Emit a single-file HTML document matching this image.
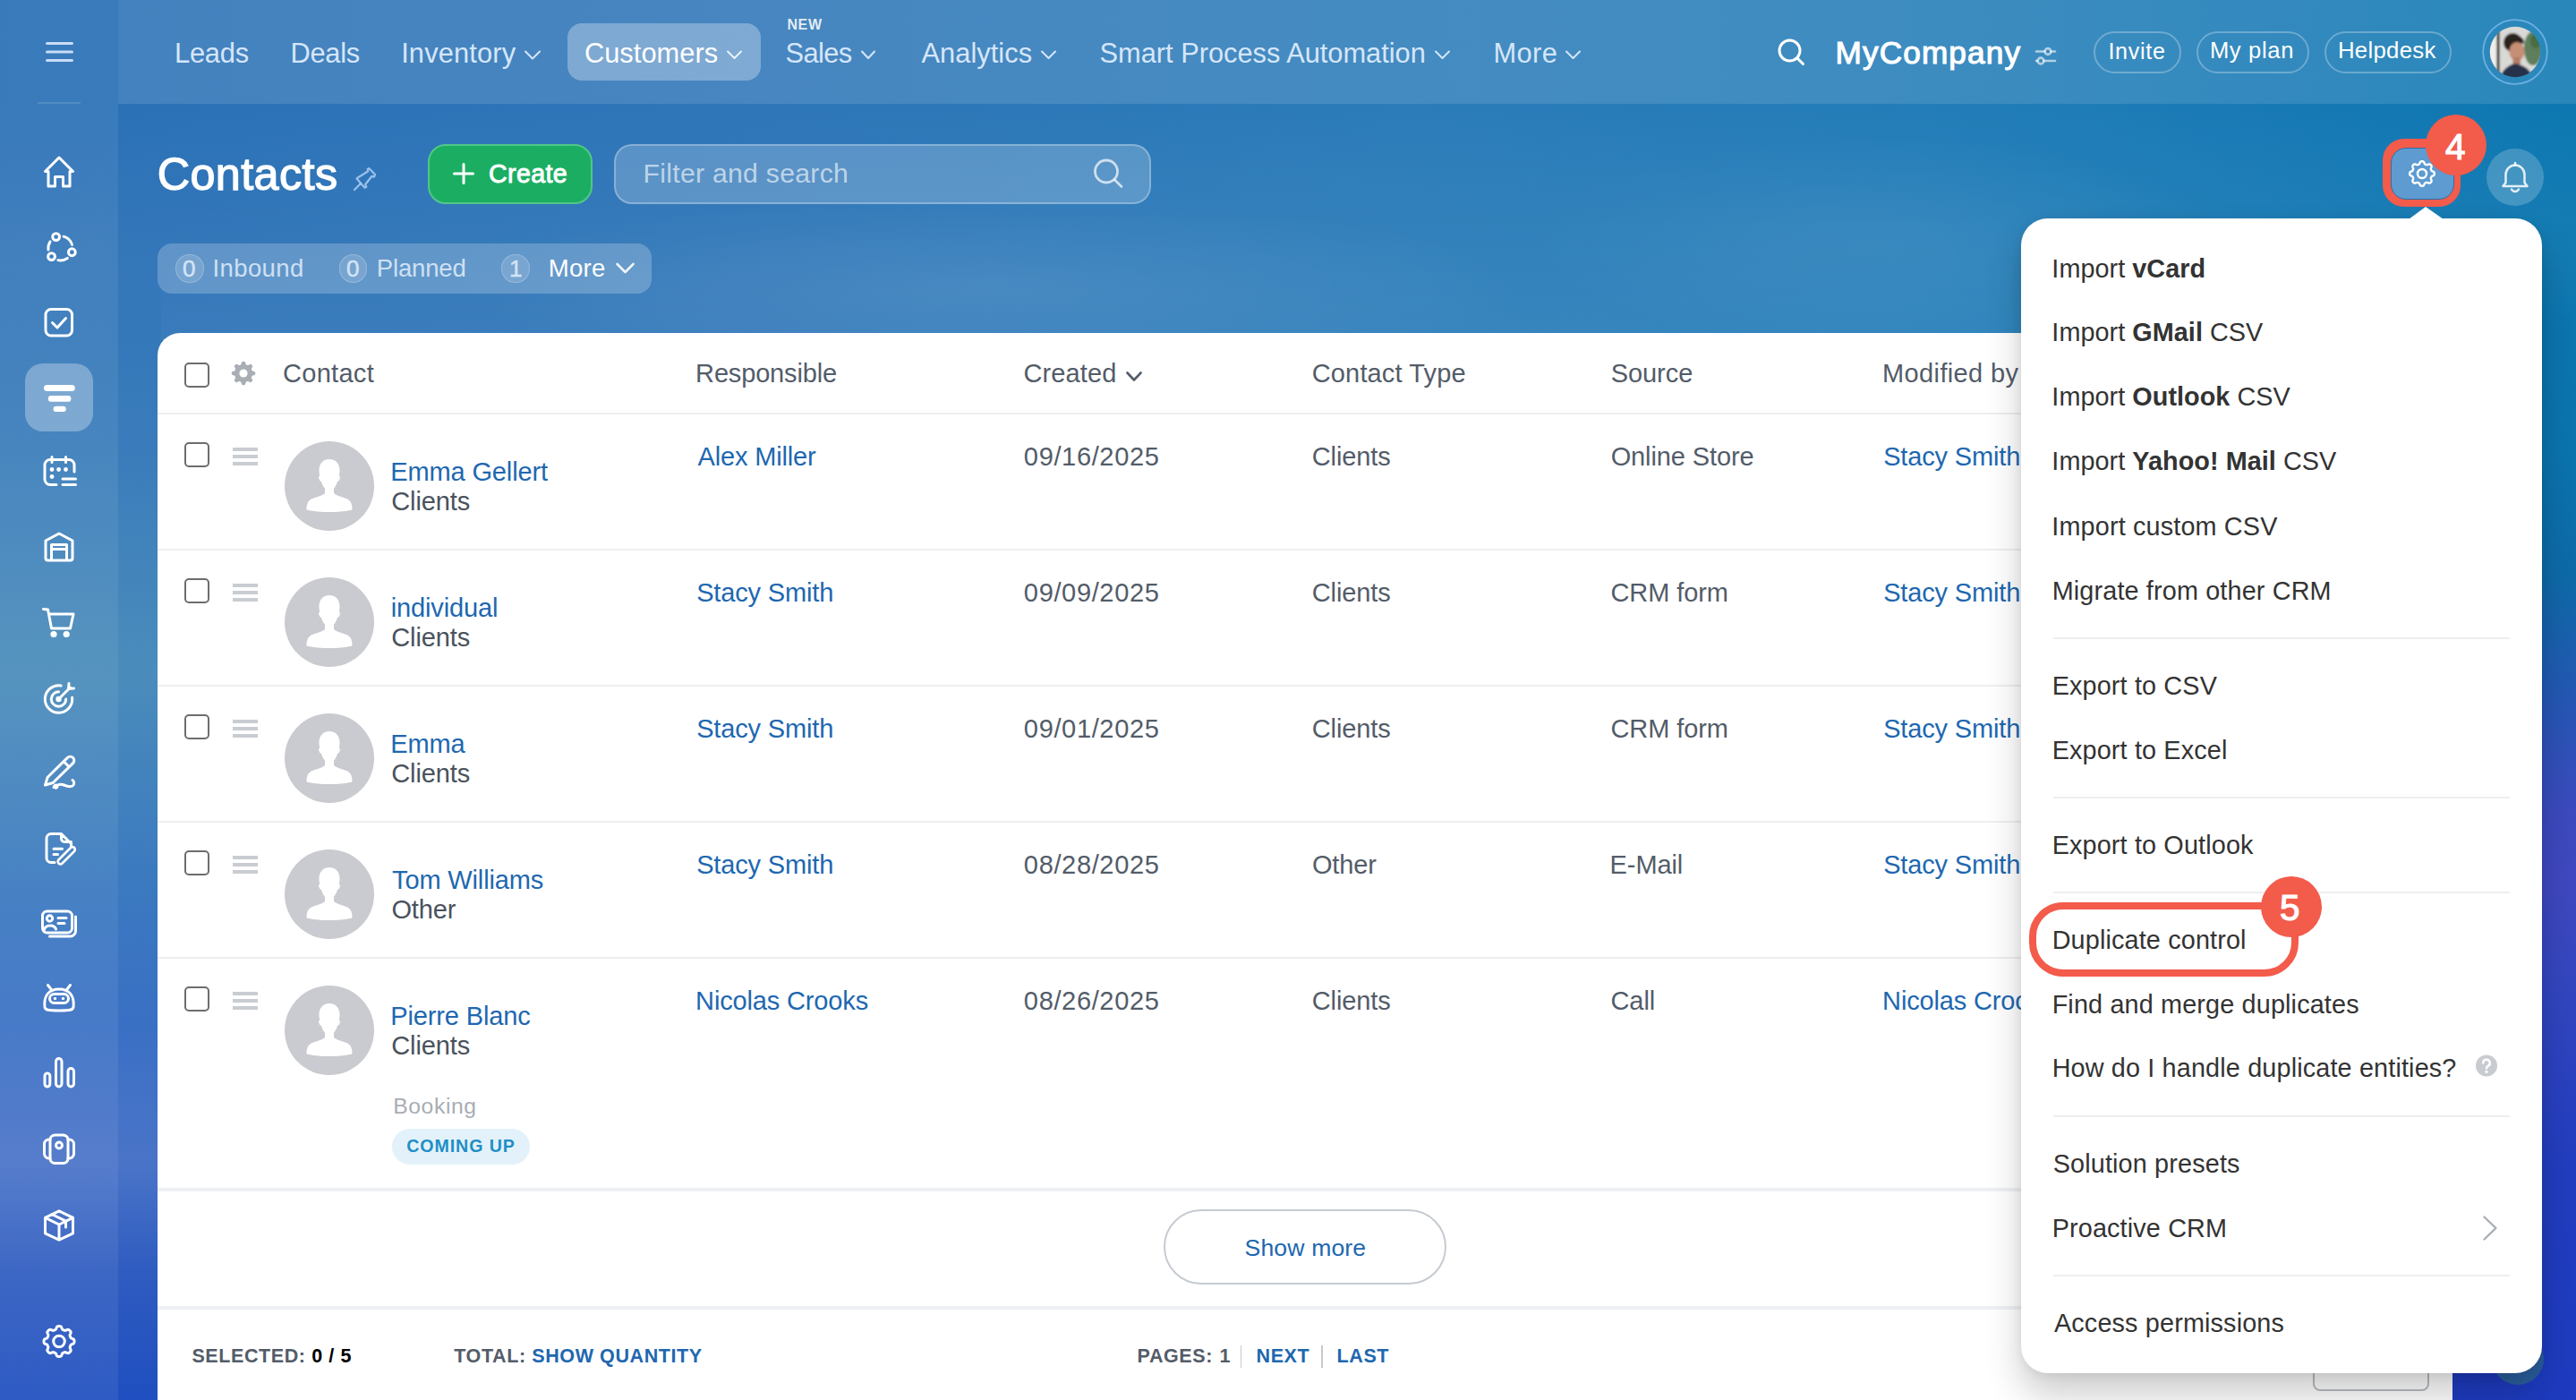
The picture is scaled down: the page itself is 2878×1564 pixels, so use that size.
<!DOCTYPE html><html><head><meta charset="utf-8"><style>
*{margin:0;padding:0;box-sizing:border-box}
html,body{width:2878px;height:1564px;overflow:hidden}
body{position:relative;font-family:"Liberation Sans",sans-serif;background:#2670b5}
.a{position:absolute}
.t{position:absolute;white-space:nowrap}
</style></head><body>
<div class="a" style="left:0;top:0;width:2878px;height:380px;background:linear-gradient(90deg,#2a70b6 0%,#2e76b8 30%,#2b7cb9 55%,#237db8 75%,#1679b4 90%,#0c77b0 100%)"></div>
<div class="a" style="left:0;top:116px;width:2878px;height:264px;background:linear-gradient(180deg,rgba(255,255,255,0) 0%,rgba(255,255,255,0.07) 100%)"></div>
<div class="a" style="left:500px;top:220px;width:1200px;height:200px;border-radius:50%;background:radial-gradient(closest-side,rgba(255,255,255,0.08),rgba(255,255,255,0))"></div>
<div class="a" style="left:1700px;top:150px;width:800px;height:240px;border-radius:50%;background:radial-gradient(closest-side,rgba(255,255,255,0.06),rgba(255,255,255,0))"></div>
<div class="a" style="left:0;top:300px;width:180px;height:1264px;-webkit-mask-image:linear-gradient(180deg,transparent 0,#000 70px);background:linear-gradient(180deg,#3176b9 0%,#3a7cbb 15.8%,#4a8cbb 35.6%,#3a78c0 55.4%,#3a70c4 67.2%,#4a74c8 79.1%,#2f5cc0 88.6%,#1f4fc0 100%)"></div>
<div class="a" style="left:2700px;top:250px;width:178px;height:1314px;-webkit-mask-image:linear-gradient(180deg,transparent 0,#000 110px);background:linear-gradient(180deg,#0c77b0 0%,#0b74ae 20%,#0e6aa8 30%,#2458b4 40%,#3c4abf 50%,#4048c0 56%,#3346c0 65%,#223dc0 80%,#1e3bc0 100%)"></div>
<div class="a" style="left:0;top:0;width:132px;height:1564px;background:rgba(255,255,255,0.07)"></div>
<div class="a" style="left:132px;top:0;width:2746px;height:116px;background:rgba(255,255,255,0.12)"></div>
<div class="a" style="left:42px;top:114px;width:48px;height:2px;background:rgba(255,255,255,0.13)"></div>
<div class="a" style="left:28px;top:406px;width:76px;height:76px;border-radius:20px;background:rgba(255,255,255,0.3)"></div>
<svg class="a" style="left:0;top:0" width="132" height="1564" viewBox="0 0 132 1564"><g stroke="#c8ddf6" stroke-width="3" stroke-linecap="round"><path d="M52.5 48.4H80.5M52.5 58H80.5M52.5 67.6H80.5"/></g><path fill="none" stroke="#fff" stroke-width="3" stroke-linecap="round" stroke-linejoin="round" d="M50.5 191.5L66 176L81.5 191.5H78V208H70.5V197.5H61.5V208H54V191.5Z"/><path fill="none" stroke="#fff" stroke-width="3" stroke-linecap="round" stroke-linejoin="round" d="M71.02 264.16A13.6 13.6 0 0 1 80.51 273.32M75.30 288.44A13.6 13.6 0 0 1 64.90 290.65M54.00 278.96A13.6 13.6 0 0 1 56.09 269.89"/><circle fill="none" stroke="#fff" stroke-width="3" stroke-linecap="round" stroke-linejoin="round" cx="62.63" cy="264.60" r="3.9"/><circle fill="none" stroke="#fff" stroke-width="3" stroke-linecap="round" stroke-linejoin="round" cx="80.36" cy="281.73" r="3.9"/><circle fill="none" stroke="#fff" stroke-width="3" stroke-linecap="round" stroke-linejoin="round" cx="57.55" cy="286.58" r="3.9"/><rect fill="none" stroke="#fff" stroke-width="3" stroke-linecap="round" stroke-linejoin="round" x="51" y="345.5" width="29.5" height="29.5" rx="6"/><path fill="none" stroke="#fff" stroke-width="3" stroke-linecap="round" stroke-linejoin="round" d="M58.5 360.5L64 366L73.5 355.5"/><g stroke="#fff" stroke-linecap="round"><path stroke-width="7" d="M52.5 433.5H80.3"/><path stroke-width="6.8" d="M57.2 445.4H76"/><path stroke-width="6.3" d="M62.7 456.9H70.6"/></g><path fill="none" stroke="#fff" stroke-width="3" stroke-linecap="round" stroke-linejoin="round" d="M63 541.5H56A6 6 0 0 1 50 535.5V519.5A6 6 0 0 1 56 513.5H77A6 6 0 0 1 83 519.5V527M58 510.5V516.5M73.5 510.5V516.5M70 535H84.5M70 541.5H84.5"/><circle fill="#fff" cx="58" cy="524.5" r="2.4"/><circle fill="#fff" cx="65.6" cy="524.5" r="2.4"/><circle fill="#fff" cx="73.5" cy="524.5" r="2.4"/><circle fill="#fff" cx="58" cy="532.5" r="2.4"/><path fill="none" stroke="#fff" stroke-width="3" stroke-linecap="round" stroke-linejoin="round" d="M51 623.5V604L66 596L81 604V623.5A2.5 2.5 0 0 1 78.5 626H53.5A2.5 2.5 0 0 1 51 623.5ZM57.5 626V608.5H74.5V626M57.5 613.5H74.5"/><path fill="none" stroke="#fff" stroke-width="3" stroke-linecap="round" stroke-linejoin="round" d="M48.5 680.5L53.5 681L57.5 702H78.5L82 686H55"/><circle fill="#fff" cx="60" cy="708.5" r="3.6"/><circle fill="#fff" cx="74.2" cy="708.5" r="3.6"/><path fill="none" stroke="#fff" stroke-width="3" stroke-linecap="round" stroke-linejoin="round" d="M80.59 779.15A15.2 15.2 0 1 1 68.14 766.03M73.70 781.00A8.2 8.2 0 1 1 65.50 772.80M65.5 781L78.5 768M77 763.5L76.5 769.5L82.5 769"/><circle fill="#fff" cx="65.5" cy="781" r="3.2"/><path fill="none" stroke="#fff" stroke-width="3" stroke-linecap="round" stroke-linejoin="round" d="M50.5 877L53.2 868.3L75.5 846.4A4.3 4.3 0 0 1 81.5 852.6L59.2 874.5ZM71.2 850.6L77.2 856.8M60 879.5C61.5 876 64.5 876.5 64 879C63.5 881 61 880.5 62 879C64 876.5 68 875.5 71.5 877C75 878.5 78 879.5 81 878C83.5 876.5 83 872.5 81 871.5"/><path fill="none" stroke="#fff" stroke-width="3" stroke-linecap="round" stroke-linejoin="round" d="M61 963.5H57A5 5 0 0 1 52 958.5V936.5A5 5 0 0 1 57 931.5H68.5L79.5 942.5V945M68.5 931.5V937A3.5 3.5 0 0 0 72 940.5H79.5M60 948.3H69.5M60 954.5H64.5"/><path fill="none" stroke="#fff" stroke-width="2.6" stroke-linejoin="round" d="M65.5 960.5L79 947A2.8 2.8 0 0 1 83 951L69.5 964.5A2.8 2.8 0 0 1 65.5 960.5Z"/><path fill="none" stroke="#fff" stroke-width="3" stroke-linecap="round" stroke-linejoin="round" d="M52.5 1018H75.5A5 5 0 0 1 80.5 1023V1037A5 5 0 0 1 75.5 1042H52.5A5 5 0 0 1 47.5 1037V1023A5 5 0 0 1 52.5 1018ZM84.5 1024V1040A6 6 0 0 1 78.5 1046H55.5M65 1025.5H74M65 1031.5H72"/><circle fill="none" stroke="#fff" stroke-width="3" stroke-linecap="round" stroke-linejoin="round" cx="55.5" cy="1026" r="3.2"/><path fill="none" stroke="#fff" stroke-width="3" stroke-linecap="round" stroke-linejoin="round" d="M49 1039.5C50 1035 53 1034 56 1034C59 1034 61.5 1035 62.5 1038"/><path fill="none" stroke="#fff" stroke-width="3" stroke-linecap="round" stroke-linejoin="round" d="M50 1125C48.5 1112 55 1105 66 1105C77 1105 83.5 1112 82 1125C81.5 1128.5 78 1129 66 1129C54 1129 50.5 1128.5 50 1125ZM57 1105L53.5 1100.5M75 1105L78.5 1100.5"/><rect fill="none" stroke="#fff" stroke-width="3" stroke-linecap="round" stroke-linejoin="round" x="55.5" y="1110.5" width="21" height="10" rx="5"/><circle fill="#fff" cx="61.5" cy="1115.5" r="1.7"/><circle fill="#fff" cx="70.5" cy="1115.5" r="1.7"/><rect fill="none" stroke="#fff" stroke-width="3" stroke-linecap="round" stroke-linejoin="round" x="50" y="1199" width="5.8" height="15" rx="2.9"/><rect fill="none" stroke="#fff" stroke-width="3" stroke-linecap="round" stroke-linejoin="round" x="62.5" y="1182.5" width="6.5" height="31.5" rx="3.2"/><rect fill="none" stroke="#fff" stroke-width="3" stroke-linecap="round" stroke-linejoin="round" x="76" y="1193.5" width="6.5" height="20.5" rx="3.2"/><rect fill="none" stroke="#fff" stroke-width="3" stroke-linecap="round" stroke-linejoin="round" x="56" y="1268" width="20" height="31.5" rx="5.5"/><circle fill="none" stroke="#fff" stroke-width="3" stroke-linecap="round" stroke-linejoin="round" cx="66" cy="1279.5" r="3.4"/><path fill="none" stroke="#fff" stroke-width="3" stroke-linecap="round" stroke-linejoin="round" d="M56 1273H54.5A5 5 0 0 0 49.5 1278V1289A5 5 0 0 0 54.5 1294H56M76 1273H77.5A5 5 0 0 1 82.5 1278V1289A5 5 0 0 1 77.5 1294H76"/><path fill="none" stroke="#fff" stroke-width="3" stroke-linecap="round" stroke-linejoin="round" d="M66 1352.8L81.5 1360.3V1377.8L66 1385.2L50.5 1377.8V1360.3ZM50.5 1360.3L66 1368L81.5 1360.3M66 1368V1385M58 1356.5L73.5 1364.2V1371"/><path fill="none" stroke="#fff" stroke-width="3" stroke-linecap="round" stroke-linejoin="round" d="M83.00 1498.50 L82.99 1498.80 L82.98 1499.09 L82.94 1499.39 L82.89 1499.68 L82.82 1499.97 L82.71 1500.26 L82.55 1500.53 L82.32 1500.79 L82.01 1501.04 L81.60 1501.25 L81.13 1501.44 L80.64 1501.61 L80.19 1501.78 L79.82 1501.95 L79.54 1502.13 L79.32 1502.32 L79.15 1502.52 L79.02 1502.73 L78.90 1502.94 L78.80 1503.16 L78.70 1503.38 L78.61 1503.59 L78.52 1503.81 L78.43 1504.03 L78.35 1504.26 L78.27 1504.48 L78.20 1504.71 L78.15 1504.96 L78.12 1505.22 L78.14 1505.51 L78.21 1505.84 L78.35 1506.22 L78.55 1506.65 L78.78 1507.12 L78.98 1507.59 L79.11 1508.03 L79.16 1508.42 L79.14 1508.76 L79.06 1509.07 L78.93 1509.35 L78.78 1509.61 L78.61 1509.85 L78.42 1510.08 L78.23 1510.31 L78.02 1510.52 L77.81 1510.73 L77.58 1510.92 L77.35 1511.11 L77.11 1511.28 L76.85 1511.43 L76.57 1511.56 L76.26 1511.64 L75.92 1511.66 L75.53 1511.61 L75.09 1511.48 L74.62 1511.28 L74.15 1511.05 L73.72 1510.85 L73.34 1510.71 L73.01 1510.64 L72.72 1510.62 L72.46 1510.65 L72.21 1510.70 L71.98 1510.77 L71.76 1510.85 L71.53 1510.93 L71.31 1511.02 L71.09 1511.11 L70.88 1511.20 L70.66 1511.30 L70.44 1511.40 L70.23 1511.52 L70.02 1511.65 L69.82 1511.82 L69.63 1512.04 L69.45 1512.32 L69.28 1512.69 L69.11 1513.14 L68.94 1513.63 L68.75 1514.10 L68.54 1514.51 L68.29 1514.82 L68.03 1515.05 L67.76 1515.21 L67.47 1515.32 L67.18 1515.39 L66.89 1515.44 L66.59 1515.48 L66.30 1515.49 L66.00 1515.50 L65.70 1515.49 L65.41 1515.48 L65.11 1515.44 L64.82 1515.39 L64.53 1515.32 L64.24 1515.21 L63.97 1515.05 L63.71 1514.82 L63.46 1514.51 L63.25 1514.10 L63.06 1513.63 L62.89 1513.14 L62.72 1512.69 L62.55 1512.32 L62.37 1512.04 L62.18 1511.82 L61.98 1511.65 L61.77 1511.52 L61.56 1511.40 L61.34 1511.30 L61.12 1511.20 L60.91 1511.11 L60.69 1511.02 L60.47 1510.93 L60.24 1510.85 L60.02 1510.77 L59.79 1510.70 L59.54 1510.65 L59.28 1510.62 L58.99 1510.64 L58.66 1510.71 L58.28 1510.85 L57.85 1511.05 L57.38 1511.28 L56.91 1511.48 L56.47 1511.61 L56.08 1511.66 L55.74 1511.64 L55.43 1511.56 L55.15 1511.43 L54.89 1511.28 L54.65 1511.11 L54.42 1510.92 L54.19 1510.73 L53.98 1510.52 L53.77 1510.31 L53.58 1510.08 L53.39 1509.85 L53.22 1509.61 L53.07 1509.35 L52.94 1509.07 L52.86 1508.76 L52.84 1508.42 L52.89 1508.03 L53.02 1507.59 L53.22 1507.12 L53.45 1506.65 L53.65 1506.22 L53.79 1505.84 L53.86 1505.51 L53.88 1505.22 L53.85 1504.96 L53.80 1504.71 L53.73 1504.48 L53.65 1504.26 L53.57 1504.03 L53.48 1503.81 L53.39 1503.59 L53.30 1503.38 L53.20 1503.16 L53.10 1502.94 L52.98 1502.73 L52.85 1502.52 L52.68 1502.32 L52.46 1502.13 L52.18 1501.95 L51.81 1501.78 L51.36 1501.61 L50.87 1501.44 L50.40 1501.25 L49.99 1501.04 L49.68 1500.79 L49.45 1500.53 L49.29 1500.26 L49.18 1499.97 L49.11 1499.68 L49.06 1499.39 L49.02 1499.09 L49.01 1498.80 L49.00 1498.50 L49.01 1498.20 L49.02 1497.91 L49.06 1497.61 L49.11 1497.32 L49.18 1497.03 L49.29 1496.74 L49.45 1496.47 L49.68 1496.21 L49.99 1495.96 L50.40 1495.75 L50.87 1495.56 L51.36 1495.39 L51.81 1495.22 L52.18 1495.05 L52.46 1494.87 L52.68 1494.68 L52.85 1494.48 L52.98 1494.27 L53.10 1494.06 L53.20 1493.84 L53.30 1493.62 L53.39 1493.41 L53.48 1493.19 L53.57 1492.97 L53.65 1492.74 L53.73 1492.52 L53.80 1492.29 L53.85 1492.04 L53.88 1491.78 L53.86 1491.49 L53.79 1491.16 L53.65 1490.78 L53.45 1490.35 L53.22 1489.88 L53.02 1489.41 L52.89 1488.97 L52.84 1488.58 L52.86 1488.24 L52.94 1487.93 L53.07 1487.65 L53.22 1487.39 L53.39 1487.15 L53.58 1486.92 L53.77 1486.69 L53.98 1486.48 L54.19 1486.27 L54.42 1486.08 L54.65 1485.89 L54.89 1485.72 L55.15 1485.57 L55.43 1485.44 L55.74 1485.36 L56.08 1485.34 L56.47 1485.39 L56.91 1485.52 L57.38 1485.72 L57.85 1485.95 L58.28 1486.15 L58.66 1486.29 L58.99 1486.36 L59.28 1486.38 L59.54 1486.35 L59.79 1486.30 L60.02 1486.23 L60.24 1486.15 L60.47 1486.07 L60.69 1485.98 L60.91 1485.89 L61.12 1485.80 L61.34 1485.70 L61.56 1485.60 L61.77 1485.48 L61.98 1485.35 L62.18 1485.18 L62.37 1484.96 L62.55 1484.68 L62.72 1484.31 L62.89 1483.86 L63.06 1483.37 L63.25 1482.90 L63.46 1482.49 L63.71 1482.18 L63.97 1481.95 L64.24 1481.79 L64.53 1481.68 L64.82 1481.61 L65.11 1481.56 L65.41 1481.52 L65.70 1481.51 L66.00 1481.50 L66.30 1481.51 L66.59 1481.52 L66.89 1481.56 L67.18 1481.61 L67.47 1481.68 L67.76 1481.79 L68.03 1481.95 L68.29 1482.18 L68.54 1482.49 L68.75 1482.90 L68.94 1483.37 L69.11 1483.86 L69.28 1484.31 L69.45 1484.68 L69.63 1484.96 L69.82 1485.18 L70.02 1485.35 L70.23 1485.48 L70.44 1485.60 L70.66 1485.70 L70.88 1485.80 L71.09 1485.89 L71.31 1485.98 L71.53 1486.07 L71.76 1486.15 L71.98 1486.23 L72.21 1486.30 L72.46 1486.35 L72.72 1486.38 L73.01 1486.36 L73.34 1486.29 L73.72 1486.15 L74.15 1485.95 L74.62 1485.72 L75.09 1485.52 L75.53 1485.39 L75.92 1485.34 L76.26 1485.36 L76.57 1485.44 L76.85 1485.57 L77.11 1485.72 L77.35 1485.89 L77.58 1486.08 L77.81 1486.27 L78.02 1486.48 L78.23 1486.69 L78.42 1486.92 L78.61 1487.15 L78.78 1487.39 L78.93 1487.65 L79.06 1487.93 L79.14 1488.24 L79.16 1488.58 L79.11 1488.97 L78.98 1489.41 L78.78 1489.88 L78.55 1490.35 L78.35 1490.78 L78.21 1491.16 L78.14 1491.49 L78.12 1491.78 L78.15 1492.04 L78.20 1492.29 L78.27 1492.52 L78.35 1492.74 L78.43 1492.97 L78.52 1493.19 L78.61 1493.41 L78.70 1493.62 L78.80 1493.84 L78.90 1494.06 L79.02 1494.27 L79.15 1494.48 L79.32 1494.68 L79.54 1494.87 L79.82 1495.05 L80.19 1495.22 L80.64 1495.39 L81.13 1495.56 L81.60 1495.75 L82.01 1495.96 L82.32 1496.21 L82.55 1496.47 L82.71 1496.74 L82.82 1497.03 L82.89 1497.32 L82.94 1497.61 L82.98 1497.91 L82.99 1498.20Z"/><circle fill="none" stroke="#fff" stroke-width="3" stroke-linecap="round" stroke-linejoin="round" cx="66" cy="1498.5" r="6.3"/></svg>
<div class="a" style="left:634px;top:26px;width:216px;height:64px;border-radius:16px;background:rgba(255,255,255,0.3)"></div>
<div class="t" style="left:194.97px;top:44.92px;font-size:30.8px;line-height:30.8px;color:#d6e6f9;letter-spacing:-0.195px;">Leads</div>
<div class="t" style="left:324.47px;top:44.92px;font-size:30.8px;line-height:30.8px;color:#d6e6f9;letter-spacing:-0.276px;">Deals</div>
<div class="t" style="left:448.16px;top:44.92px;font-size:30.8px;line-height:30.8px;color:#d6e6f9;letter-spacing:0.152px;">Inventory</div>
<div class="t" style="left:652.94px;top:44.92px;font-size:30.8px;line-height:30.8px;color:#fff;letter-spacing:0.034px;">Customers</div>
<div class="t" style="left:879.43px;top:20.45px;font-size:16px;line-height:16px;color:rgba(255,255,255,0.85);font-weight:700;letter-spacing:0.629px;">NEW</div>
<div class="t" style="left:877.60px;top:44.92px;font-size:30.8px;line-height:30.8px;color:#d6e6f9;letter-spacing:-0.633px;">Sales</div>
<div class="t" style="left:1029.44px;top:44.92px;font-size:30.8px;line-height:30.8px;color:#d6e6f9;letter-spacing:0.053px;">Analytics</div>
<div class="t" style="left:1228.60px;top:44.92px;font-size:30.8px;line-height:30.8px;color:#d6e6f9;letter-spacing:-0.018px;">Smart Process Automation</div>
<div class="t" style="left:1668.47px;top:44.92px;font-size:30.8px;line-height:30.8px;color:#d6e6f9;letter-spacing:0.408px;">More</div>
<svg class="a" style="left:0;top:0" width="2878" height="116" viewBox="0 0 2878 116"><path fill="none" stroke="#d6e6f9" stroke-width="2.0" stroke-linecap="round" stroke-linejoin="round" d="M587 57.5L595.0 65.5L603 57.5"/><path fill="none" stroke="rgba(255,255,255,0.85)" stroke-width="2.0" stroke-linecap="round" stroke-linejoin="round" d="M813 57.5L820.5 65L828 57.5"/><path fill="none" stroke="#d6e6f9" stroke-width="2.0" stroke-linecap="round" stroke-linejoin="round" d="M963 57.5L970.0 65L977 57.5"/><path fill="none" stroke="#d6e6f9" stroke-width="2.0" stroke-linecap="round" stroke-linejoin="round" d="M1164 57.5L1171.5 65L1179 57.5"/><path fill="none" stroke="#d6e6f9" stroke-width="2.0" stroke-linecap="round" stroke-linejoin="round" d="M1604 57.5L1611.5 65L1619 57.5"/><path fill="none" stroke="#d6e6f9" stroke-width="2.0" stroke-linecap="round" stroke-linejoin="round" d="M1750 57.5L1757.5 65L1765 57.5"/><circle cx="1999.5" cy="56.5" r="11.5" fill="none" stroke="#fff" stroke-width="3"/><path d="M2008 65L2014.5 71.5" stroke="#fff" stroke-width="3" stroke-linecap="round"/><g stroke="rgba(255,255,255,0.6)" stroke-width="2.6" stroke-linecap="round" fill="none"><path d="M2275 57.5H2284.5M2291.5 57.5H2296M2275 68H2276.5M2283.5 68H2296"/><circle cx="2288" cy="57.5" r="3.4"/><circle cx="2280" cy="68" r="3.4"/></g></svg>
<div class="t" style="left:2050.61px;top:41.20px;font-size:35.2px;line-height:35.2px;color:#fff;letter-spacing:1.111px;-webkit-text-stroke:1.1px #fff;">MyCompany</div>
<div class="a" style="left:2338.5px;top:34.5px;width:98.0px;height:47px;border-radius:24px;border:2px solid rgba(255,255,255,0.28)"></div>
<div class="t" style="left:2355.43px;top:44.75px;font-size:25.1px;line-height:25.1px;color:#fff;letter-spacing:0.688px;">Invite</div>
<div class="a" style="left:2453.5px;top:34.5px;width:126.0px;height:47px;border-radius:24px;border:2px solid rgba(255,255,255,0.28)"></div>
<div class="t" style="left:2468.90px;top:44.32px;font-size:25.6px;line-height:25.6px;color:#fff;letter-spacing:0.646px;">My plan</div>
<div class="a" style="left:2596.5px;top:34.5px;width:142.5px;height:47px;border-radius:24px;border:2px solid rgba(255,255,255,0.28)"></div>
<div class="t" style="left:2611.88px;top:44.16px;font-size:25.8px;line-height:25.8px;color:#fff;letter-spacing:0.289px;">Helpdesk</div>
<svg class="a" style="left:2770px;top:18px" width="80" height="80" viewBox="0 0 80 80">
<defs><clipPath id="av"><circle cx="40" cy="40" r="28.2"/></clipPath><filter id="bl"><feGaussianBlur stdDeviation="0.8"/></filter></defs>
<circle cx="40" cy="40" r="35.8" fill="none" stroke="rgba(120,185,235,0.85)" stroke-width="1.8"/>
<g clip-path="url(#av)"><g filter="url(#bl)"><rect x="0" y="0" width="80" height="80" fill="#d9d9d6"/>
<rect x="8" y="10" width="14" height="60" fill="#efeeeb"/>
<rect x="19.5" y="16" width="3" height="48" fill="#2e2b28"/>
<ellipse cx="60" cy="36" rx="10" ry="19" fill="#5e7f5c"/>
<ellipse cx="63" cy="28" rx="6" ry="8" fill="#466d45"/>
<ellipse cx="37.5" cy="29.5" rx="10.5" ry="10.5" fill="#2a201b"/>
<ellipse cx="42" cy="39.5" rx="8.6" ry="10.6" fill="#c48f74"/>
<path d="M32 35C31 26 36 22 41.5 22C47 22 50 25.5 50.5 31.5C47 28 41 27.5 35 31Z" fill="#2a201b"/>
<rect x="37.5" y="46" width="8.5" height="8" fill="#b27c63"/>
<path d="M21 80C22 63 30 55 40 53C52 55 60 61 63 80Z" fill="#25304a"/>
</g></g></svg>
<div class="t" style="left:175.65px;top:169.91px;font-size:50.3px;line-height:50.3px;color:#fff;letter-spacing:0.425px;-webkit-text-stroke:1.3px #fff;">Contacts</div>
<svg class="a" style="left:0;top:0" width="440" height="230" viewBox="0 0 440 230"><g fill="none" stroke="rgba(190,220,255,0.72)" stroke-width="2.3" stroke-linecap="round" stroke-linejoin="round"><path d="M398.5 199.5L400.5 198L411 191.5L410.8 188.8L412.5 188.2L419 195L418 197.6L415.5 196.8L408.2 206L409.3 208.8L407.5 209.7Z"/><path d="M396 212L402.5 205.5"/></g></svg>
<div class="a" style="left:478px;top:160.5px;width:184px;height:67px;border-radius:20px;background:#1bae62;border:2px solid #52c688"></div>
<svg class="a" style="left:500px;top:176px" width="36" height="36" viewBox="0 0 36 36"><path d="M18 7.5V28.5M7.5 18H28.5" stroke="#fff" stroke-width="3" stroke-linecap="round"/></svg>
<div class="t" style="left:546.05px;top:179.53px;font-size:28.6px;line-height:28.6px;color:#fff;letter-spacing:0.376px;-webkit-text-stroke:0.9px #fff;">Create</div>
<div class="a" style="left:686px;top:160.5px;width:600px;height:67px;border-radius:20px;background:rgba(255,255,255,0.2);border:2px solid rgba(255,255,255,0.28)"></div>
<div class="t" style="left:718.52px;top:178.93px;font-size:30.2px;line-height:30.2px;color:rgba(255,255,255,0.62);letter-spacing:0.282px;">Filter and search</div>
<svg class="a" style="left:1216px;top:172px" width="44" height="44" viewBox="0 0 44 44"><circle cx="20" cy="19.5" r="12.5" fill="none" stroke="rgba(255,255,255,0.7)" stroke-width="2.8"/><path d="M29.5 29L37 36.5" stroke="rgba(255,255,255,0.7)" stroke-width="2.8" stroke-linecap="round"/></svg>
<div class="a" style="left:176px;top:272px;width:551.5px;height:55.5px;border-radius:16px;background:rgba(255,255,255,0.22)"></div>
<div class="a" style="left:196.0px;top:284.25px;width:31.5px;height:31.5px;border-radius:50%;border:1.6px solid rgba(255,255,255,0.22);background:rgba(255,255,255,0.14)"></div>
<div class="a" style="left:378.75px;top:284.25px;width:31.5px;height:31.5px;border-radius:50%;border:1.6px solid rgba(255,255,255,0.22);background:rgba(255,255,255,0.14)"></div>
<div class="a" style="left:560.0px;top:284.25px;width:31.5px;height:31.5px;border-radius:50%;border:1.6px solid rgba(255,255,255,0.22);background:rgba(255,255,255,0.14)"></div>
<div class="t" style="left:203.98px;top:286.99px;font-size:26px;line-height:26px;color:#d3e3f5;-webkit-text-stroke:0.5px #d3e3f5;">0</div>
<div class="t" style="left:386.98px;top:286.99px;font-size:26px;line-height:26px;color:#d3e3f5;-webkit-text-stroke:0.5px #d3e3f5;">0</div>
<div class="t" style="left:569.02px;top:286.99px;font-size:26px;line-height:26px;color:#d3e3f5;-webkit-text-stroke:0.5px #d3e3f5;">1</div>
<div class="t" style="left:237.46px;top:285.72px;font-size:27.5px;line-height:27.5px;color:#cfe0f3;letter-spacing:0.401px;">Inbound</div>
<div class="t" style="left:420.74px;top:285.72px;font-size:27.5px;line-height:27.5px;color:#cfe0f3;letter-spacing:-0.149px;">Planned</div>
<div class="t" style="left:612.74px;top:285.72px;font-size:27.5px;line-height:27.5px;color:#fff;letter-spacing:0.275px;">More</div>
<svg class="a" style="left:680px;top:285px" width="36" height="30" viewBox="0 0 36 30"><path fill="none" stroke="rgba(255,255,255,0.9)" stroke-width="2.6" stroke-linecap="round" stroke-linejoin="round" d="M9.5 10L18.5 19L27.5 10"/></svg>
<div class="a" style="left:2662px;top:154.5px;width:87px;height:76.5px;border-radius:24px;background:#f35b4b"></div>
<div class="a" style="left:2671px;top:165px;width:70.5px;height:58px;border-radius:17px;background:#5d9bd0;border:1.5px solid #2f6ea8"></div>
<svg class="a" style="left:2686px;top:174px" width="40" height="40" viewBox="0 0 40 40"><path fill="none" stroke="#fff" stroke-width="2.4" stroke-linejoin="round" d="M33.80 20.00 L33.79 20.24 L33.78 20.48 L33.75 20.72 L33.70 20.96 L33.63 21.19 L33.53 21.42 L33.38 21.64 L33.19 21.85 L32.93 22.05 L32.62 22.22 L32.26 22.38 L31.88 22.53 L31.54 22.66 L31.24 22.80 L31.00 22.95 L30.82 23.10 L30.67 23.26 L30.55 23.43 L30.45 23.60 L30.36 23.77 L30.28 23.95 L30.20 24.12 L30.13 24.30 L30.06 24.48 L29.99 24.66 L29.93 24.84 L29.88 25.04 L29.85 25.24 L29.84 25.46 L29.87 25.70 L29.93 25.97 L30.04 26.27 L30.19 26.62 L30.35 26.98 L30.49 27.35 L30.59 27.70 L30.64 28.02 L30.63 28.30 L30.57 28.56 L30.48 28.79 L30.36 29.01 L30.23 29.21 L30.08 29.40 L29.92 29.58 L29.76 29.76 L29.58 29.92 L29.40 30.08 L29.21 30.23 L29.01 30.36 L28.79 30.48 L28.56 30.57 L28.30 30.63 L28.02 30.64 L27.70 30.59 L27.35 30.49 L26.98 30.35 L26.62 30.19 L26.27 30.04 L25.97 29.93 L25.70 29.87 L25.46 29.84 L25.24 29.85 L25.04 29.88 L24.84 29.93 L24.66 29.99 L24.48 30.06 L24.30 30.13 L24.12 30.20 L23.95 30.28 L23.77 30.36 L23.60 30.45 L23.43 30.55 L23.26 30.67 L23.10 30.82 L22.95 31.00 L22.80 31.24 L22.66 31.54 L22.53 31.88 L22.38 32.26 L22.22 32.62 L22.05 32.93 L21.85 33.19 L21.64 33.38 L21.42 33.53 L21.19 33.63 L20.96 33.70 L20.72 33.75 L20.48 33.78 L20.24 33.79 L20.00 33.80 L19.76 33.79 L19.52 33.78 L19.28 33.75 L19.04 33.70 L18.81 33.63 L18.58 33.53 L18.36 33.38 L18.15 33.19 L17.95 32.93 L17.78 32.62 L17.62 32.26 L17.47 31.88 L17.34 31.54 L17.20 31.24 L17.05 31.00 L16.90 30.82 L16.74 30.67 L16.57 30.55 L16.40 30.45 L16.23 30.36 L16.05 30.28 L15.88 30.20 L15.70 30.13 L15.52 30.06 L15.34 29.99 L15.16 29.93 L14.96 29.88 L14.76 29.85 L14.54 29.84 L14.30 29.87 L14.03 29.93 L13.73 30.04 L13.38 30.19 L13.02 30.35 L12.65 30.49 L12.30 30.59 L11.98 30.64 L11.70 30.63 L11.44 30.57 L11.21 30.48 L10.99 30.36 L10.79 30.23 L10.60 30.08 L10.42 29.92 L10.24 29.76 L10.08 29.58 L9.92 29.40 L9.77 29.21 L9.64 29.01 L9.52 28.79 L9.43 28.56 L9.37 28.30 L9.36 28.02 L9.41 27.70 L9.51 27.35 L9.65 26.98 L9.81 26.62 L9.96 26.27 L10.07 25.97 L10.13 25.70 L10.16 25.46 L10.15 25.24 L10.12 25.04 L10.07 24.84 L10.01 24.66 L9.94 24.48 L9.87 24.30 L9.80 24.12 L9.72 23.95 L9.64 23.77 L9.55 23.60 L9.45 23.43 L9.33 23.26 L9.18 23.10 L9.00 22.95 L8.76 22.80 L8.46 22.66 L8.12 22.53 L7.74 22.38 L7.38 22.22 L7.07 22.05 L6.81 21.85 L6.62 21.64 L6.47 21.42 L6.37 21.19 L6.30 20.96 L6.25 20.72 L6.22 20.48 L6.21 20.24 L6.20 20.00 L6.21 19.76 L6.22 19.52 L6.25 19.28 L6.30 19.04 L6.37 18.81 L6.47 18.58 L6.62 18.36 L6.81 18.15 L7.07 17.95 L7.38 17.78 L7.74 17.62 L8.12 17.47 L8.46 17.34 L8.76 17.20 L9.00 17.05 L9.18 16.90 L9.33 16.74 L9.45 16.57 L9.55 16.40 L9.64 16.23 L9.72 16.05 L9.80 15.88 L9.87 15.70 L9.94 15.52 L10.01 15.34 L10.07 15.16 L10.12 14.96 L10.15 14.76 L10.16 14.54 L10.13 14.30 L10.07 14.03 L9.96 13.73 L9.81 13.38 L9.65 13.02 L9.51 12.65 L9.41 12.30 L9.36 11.98 L9.37 11.70 L9.43 11.44 L9.52 11.21 L9.64 10.99 L9.77 10.79 L9.92 10.60 L10.08 10.42 L10.24 10.24 L10.42 10.08 L10.60 9.92 L10.79 9.77 L10.99 9.64 L11.21 9.52 L11.44 9.43 L11.70 9.37 L11.98 9.36 L12.30 9.41 L12.65 9.51 L13.02 9.65 L13.38 9.81 L13.73 9.96 L14.03 10.07 L14.30 10.13 L14.54 10.16 L14.76 10.15 L14.96 10.12 L15.16 10.07 L15.34 10.01 L15.52 9.94 L15.70 9.87 L15.88 9.80 L16.05 9.72 L16.23 9.64 L16.40 9.55 L16.57 9.45 L16.74 9.33 L16.90 9.18 L17.05 9.00 L17.20 8.76 L17.34 8.46 L17.47 8.12 L17.62 7.74 L17.78 7.38 L17.95 7.07 L18.15 6.81 L18.36 6.62 L18.58 6.47 L18.81 6.37 L19.04 6.30 L19.28 6.25 L19.52 6.22 L19.76 6.21 L20.00 6.20 L20.24 6.21 L20.48 6.22 L20.72 6.25 L20.96 6.30 L21.19 6.37 L21.42 6.47 L21.64 6.62 L21.85 6.81 L22.05 7.07 L22.22 7.38 L22.38 7.74 L22.53 8.12 L22.66 8.46 L22.80 8.76 L22.95 9.00 L23.10 9.18 L23.26 9.33 L23.43 9.45 L23.60 9.55 L23.77 9.64 L23.95 9.72 L24.12 9.80 L24.30 9.87 L24.48 9.94 L24.66 10.01 L24.84 10.07 L25.04 10.12 L25.24 10.15 L25.46 10.16 L25.70 10.13 L25.97 10.07 L26.27 9.96 L26.62 9.81 L26.98 9.65 L27.35 9.51 L27.70 9.41 L28.02 9.36 L28.30 9.37 L28.56 9.43 L28.79 9.52 L29.01 9.64 L29.21 9.77 L29.40 9.92 L29.58 10.08 L29.76 10.24 L29.92 10.42 L30.08 10.60 L30.23 10.79 L30.36 10.99 L30.48 11.21 L30.57 11.44 L30.63 11.70 L30.64 11.98 L30.59 12.30 L30.49 12.65 L30.35 13.02 L30.19 13.38 L30.04 13.73 L29.93 14.03 L29.87 14.30 L29.84 14.54 L29.85 14.76 L29.88 14.96 L29.93 15.16 L29.99 15.34 L30.06 15.52 L30.13 15.70 L30.20 15.88 L30.28 16.05 L30.36 16.23 L30.45 16.40 L30.55 16.57 L30.67 16.74 L30.82 16.90 L31.00 17.05 L31.24 17.20 L31.54 17.34 L31.88 17.47 L32.26 17.62 L32.62 17.78 L32.93 17.95 L33.19 18.15 L33.38 18.36 L33.53 18.58 L33.63 18.81 L33.70 19.04 L33.75 19.28 L33.78 19.52 L33.79 19.76Z"/><circle cx="20" cy="20" r="5" fill="none" stroke="#fff" stroke-width="2.4"/></svg>
<div class="a" style="left:2710.25px;top:128px;width:68px;height:68px;border-radius:50%;background:#f35b4b"></div>
<div class="t" style="left:2732.07px;top:143.71px;font-size:40.5px;line-height:40.5px;color:#fff;-webkit-text-stroke:1.2px #fff;">4</div>
<div class="a" style="left:2778px;top:166px;width:64px;height:64px;border-radius:50%;background:rgba(255,255,255,0.2)"></div>
<svg class="a" style="left:2790px;top:178px" width="40" height="40" viewBox="0 0 40 40"><g fill="none" stroke="rgba(255,255,255,0.85)" stroke-width="2.5" stroke-linecap="round" stroke-linejoin="round"><path d="M20 4V6.5"/><path d="M9.5 26V17A10.5 10.5 0 0 1 30.5 17V26L33.5 30H6.5Z"/><path d="M16 33.5A4.5 4.5 0 0 0 24 33.5"/></g></svg>
<div class="a" style="left:175.5px;top:372px;width:2564.5px;height:1300px;background:#fff;border-radius:25px 25px 0 0"></div>
<div class="a" style="left:206.25px;top:405px;width:27.5px;height:27.5px;border-radius:5px;border:2.4px solid #6d6d6f;background:#fff"></div>
<svg class="a" style="left:256px;top:401px" width="32" height="32" viewBox="0 0 32 32"><path fill="#a9aeb5" d="M29.20 16.00 L29.19 16.23 L29.18 16.46 L29.15 16.69 L29.11 16.92 L29.04 17.14 L28.94 17.36 L28.80 17.57 L28.59 17.77 L28.30 17.95 L27.93 18.10 L27.49 18.23 L27.04 18.35 L26.63 18.45 L26.29 18.57 L26.04 18.69 L25.85 18.82 L25.70 18.97 L25.59 19.12 L25.50 19.27 L25.42 19.43 L25.34 19.59 L25.27 19.75 L25.21 19.91 L25.14 20.07 L25.08 20.24 L25.03 20.40 L24.99 20.58 L24.96 20.76 L24.96 20.97 L25.00 21.19 L25.09 21.46 L25.25 21.78 L25.47 22.15 L25.70 22.55 L25.92 22.95 L26.08 23.32 L26.15 23.65 L26.16 23.94 L26.11 24.19 L26.03 24.41 L25.91 24.62 L25.79 24.81 L25.64 24.99 L25.49 25.17 L25.33 25.33 L25.17 25.49 L24.99 25.64 L24.81 25.79 L24.62 25.91 L24.41 26.03 L24.19 26.11 L23.94 26.16 L23.65 26.15 L23.32 26.08 L22.95 25.92 L22.55 25.70 L22.15 25.47 L21.78 25.25 L21.46 25.09 L21.19 25.00 L20.97 24.96 L20.76 24.96 L20.58 24.99 L20.40 25.03 L20.24 25.08 L20.07 25.14 L19.91 25.21 L19.75 25.27 L19.59 25.34 L19.43 25.42 L19.27 25.50 L19.12 25.59 L18.97 25.70 L18.82 25.85 L18.69 26.04 L18.57 26.29 L18.45 26.63 L18.35 27.04 L18.23 27.49 L18.10 27.93 L17.95 28.30 L17.77 28.59 L17.57 28.80 L17.36 28.94 L17.14 29.04 L16.92 29.11 L16.69 29.15 L16.46 29.18 L16.23 29.19 L16.00 29.20 L15.77 29.19 L15.54 29.18 L15.31 29.15 L15.08 29.11 L14.86 29.04 L14.64 28.94 L14.43 28.80 L14.23 28.59 L14.05 28.30 L13.90 27.93 L13.77 27.49 L13.65 27.04 L13.55 26.63 L13.43 26.29 L13.31 26.04 L13.18 25.85 L13.03 25.70 L12.88 25.59 L12.73 25.50 L12.57 25.42 L12.41 25.34 L12.25 25.27 L12.09 25.21 L11.93 25.14 L11.76 25.08 L11.60 25.03 L11.42 24.99 L11.24 24.96 L11.03 24.96 L10.81 25.00 L10.54 25.09 L10.22 25.25 L9.85 25.47 L9.45 25.70 L9.05 25.92 L8.68 26.08 L8.35 26.15 L8.06 26.16 L7.81 26.11 L7.59 26.03 L7.38 25.91 L7.19 25.79 L7.01 25.64 L6.83 25.49 L6.67 25.33 L6.51 25.17 L6.36 24.99 L6.21 24.81 L6.09 24.62 L5.97 24.41 L5.89 24.19 L5.84 23.94 L5.85 23.65 L5.92 23.32 L6.08 22.95 L6.30 22.55 L6.53 22.15 L6.75 21.78 L6.91 21.46 L7.00 21.19 L7.04 20.97 L7.04 20.76 L7.01 20.58 L6.97 20.40 L6.92 20.24 L6.86 20.07 L6.79 19.91 L6.73 19.75 L6.66 19.59 L6.58 19.43 L6.50 19.27 L6.41 19.12 L6.30 18.97 L6.15 18.82 L5.96 18.69 L5.71 18.57 L5.37 18.45 L4.96 18.35 L4.51 18.23 L4.07 18.10 L3.70 17.95 L3.41 17.77 L3.20 17.57 L3.06 17.36 L2.96 17.14 L2.89 16.92 L2.85 16.69 L2.82 16.46 L2.81 16.23 L2.80 16.00 L2.81 15.77 L2.82 15.54 L2.85 15.31 L2.89 15.08 L2.96 14.86 L3.06 14.64 L3.20 14.43 L3.41 14.23 L3.70 14.05 L4.07 13.90 L4.51 13.77 L4.96 13.65 L5.37 13.55 L5.71 13.43 L5.96 13.31 L6.15 13.18 L6.30 13.03 L6.41 12.88 L6.50 12.73 L6.58 12.57 L6.66 12.41 L6.73 12.25 L6.79 12.09 L6.86 11.93 L6.92 11.76 L6.97 11.60 L7.01 11.42 L7.04 11.24 L7.04 11.03 L7.00 10.81 L6.91 10.54 L6.75 10.22 L6.53 9.85 L6.30 9.45 L6.08 9.05 L5.92 8.68 L5.85 8.35 L5.84 8.06 L5.89 7.81 L5.97 7.59 L6.09 7.38 L6.21 7.19 L6.36 7.01 L6.51 6.83 L6.67 6.67 L6.83 6.51 L7.01 6.36 L7.19 6.21 L7.38 6.09 L7.59 5.97 L7.81 5.89 L8.06 5.84 L8.35 5.85 L8.68 5.92 L9.05 6.08 L9.45 6.30 L9.85 6.53 L10.22 6.75 L10.54 6.91 L10.81 7.00 L11.03 7.04 L11.24 7.04 L11.42 7.01 L11.60 6.97 L11.76 6.92 L11.93 6.86 L12.09 6.79 L12.25 6.73 L12.41 6.66 L12.57 6.58 L12.73 6.50 L12.88 6.41 L13.03 6.30 L13.18 6.15 L13.31 5.96 L13.43 5.71 L13.55 5.37 L13.65 4.96 L13.77 4.51 L13.90 4.07 L14.05 3.70 L14.23 3.41 L14.43 3.20 L14.64 3.06 L14.86 2.96 L15.08 2.89 L15.31 2.85 L15.54 2.82 L15.77 2.81 L16.00 2.80 L16.23 2.81 L16.46 2.82 L16.69 2.85 L16.92 2.89 L17.14 2.96 L17.36 3.06 L17.57 3.20 L17.77 3.41 L17.95 3.70 L18.10 4.07 L18.23 4.51 L18.35 4.96 L18.45 5.37 L18.57 5.71 L18.69 5.96 L18.82 6.15 L18.97 6.30 L19.12 6.41 L19.27 6.50 L19.43 6.58 L19.59 6.66 L19.75 6.73 L19.91 6.79 L20.07 6.86 L20.24 6.92 L20.40 6.97 L20.58 7.01 L20.76 7.04 L20.97 7.04 L21.19 7.00 L21.46 6.91 L21.78 6.75 L22.15 6.53 L22.55 6.30 L22.95 6.08 L23.32 5.92 L23.65 5.85 L23.94 5.84 L24.19 5.89 L24.41 5.97 L24.62 6.09 L24.81 6.21 L24.99 6.36 L25.17 6.51 L25.33 6.67 L25.49 6.83 L25.64 7.01 L25.79 7.19 L25.91 7.38 L26.03 7.59 L26.11 7.81 L26.16 8.06 L26.15 8.35 L26.08 8.68 L25.92 9.05 L25.70 9.45 L25.47 9.85 L25.25 10.22 L25.09 10.54 L25.00 10.81 L24.96 11.03 L24.96 11.24 L24.99 11.42 L25.03 11.60 L25.08 11.76 L25.14 11.93 L25.21 12.09 L25.27 12.25 L25.34 12.41 L25.42 12.57 L25.50 12.73 L25.59 12.88 L25.70 13.03 L25.85 13.18 L26.04 13.31 L26.29 13.43 L26.63 13.55 L27.04 13.65 L27.49 13.77 L27.93 13.90 L28.30 14.05 L28.59 14.23 L28.80 14.43 L28.94 14.64 L29.04 14.86 L29.11 15.08 L29.15 15.31 L29.18 15.54 L29.19 15.77Z"/><circle cx="16" cy="16" r="4.6" fill="#fff"/></svg>
<div class="t" style="left:316.03px;top:403.45px;font-size:29px;line-height:29px;color:#535c69;letter-spacing:0.290px;">Contact</div>
<div class="t" style="left:777.12px;top:403.45px;font-size:29px;line-height:29px;color:#535c69;letter-spacing:-0.168px;">Responsible</div>
<div class="t" style="left:1143.53px;top:403.45px;font-size:29px;line-height:29px;color:#535c69;letter-spacing:0.112px;">Created</div>
<svg class="a" style="left:1254px;top:410px" width="26" height="20" viewBox="0 0 26 20"><path fill="none" stroke="#535c69" stroke-width="2.6" stroke-linecap="round" stroke-linejoin="round" d="M5.5 6.5L13.0 14.5L20.5 6.5"/></svg>
<div class="t" style="left:1465.78px;top:403.45px;font-size:29px;line-height:29px;color:#535c69;letter-spacing:0.140px;">Contact Type</div>
<div class="t" style="left:1799.68px;top:403.45px;font-size:29px;line-height:29px;color:#535c69;letter-spacing:-0.056px;">Source</div>
<div class="t" style="left:2103.12px;top:403.45px;font-size:29px;line-height:29px;color:#535c69;letter-spacing:0.354px;">Modified by</div>
<div class="a" style="left:175.5px;top:461px;width:2564.5px;height:2px;background:#edeef0"></div>
<div class="a" style="left:206.25px;top:494px;width:27.5px;height:27.5px;border-radius:5px;border:2.4px solid #6d6d6f;background:#fff"></div>
<div class="a" style="left:260px;top:500px;width:28px;height:3.8px;background:#c9ccd1"></div>
<div class="a" style="left:260px;top:508px;width:28px;height:3.8px;background:#c9ccd1"></div>
<div class="a" style="left:260px;top:516.2px;width:28px;height:3.8px;background:#c9ccd1"></div>
<svg class="a" style="left:318px;top:493px" width="100" height="100" viewBox="0 0 100 100"><circle cx="50" cy="50" r="50" fill="#c9cbd0"/>
<path fill="#fff" d="M50 20C42.5 20 38.5 25.5 38.5 32.5C38.5 35 38.8 37 39.3 38.5C38 38.7 37.8 40.5 38.6 42.5C39.3 44.5 40.3 45 41 44.8C41.8 48.5 43.5 51 45 52.5V57.5C44 60 38 61.5 31 64C26 66 24.5 70 24.5 76.5C33 78.5 41 79 50 79C59 79 67 78.5 75.5 76.5C75.5 70 74 66 69 64C62 61.5 56 60 55 57.5V52.5C56.5 51 58.2 48.5 59 44.8C59.7 45 60.7 44.5 61.4 42.5C62.2 40.5 62 38.7 60.7 38.5C61.2 37 61.5 35 61.5 32.5C61.5 25.5 57.5 20 50 20Z"/></svg>
<div class="t" style="left:436.37px;top:512.95px;font-size:29px;line-height:29px;color:#2067b0;letter-spacing:-0.150px;">Emma Gellert</div>
<div class="t" style="left:437.28px;top:546.45px;font-size:29px;line-height:29px;color:#4a525d;letter-spacing:-0.100px;">Clients</div>
<div class="t" style="left:779.44px;top:496.45px;font-size:29px;line-height:29px;color:#2067b0;letter-spacing:-0.150px;">Alex Miller</div>
<div class="t" style="left:1143.86px;top:496.36px;font-size:29.1px;line-height:29.1px;color:#535c69;letter-spacing:0.600px;">09/16/2025</div>
<div class="t" style="left:1465.78px;top:496.45px;font-size:29px;line-height:29px;color:#535c69;letter-spacing:-0.100px;">Clients</div>
<div class="t" style="left:1799.63px;top:496.45px;font-size:29px;line-height:29px;color:#535c69;letter-spacing:-0.100px;">Online Store</div>
<div class="t" style="left:2104.18px;top:496.45px;font-size:29px;line-height:29px;color:#2067b0;letter-spacing:-0.150px;">Stacy Smith</div>
<div class="a" style="left:175.5px;top:613px;width:2564.5px;height:2px;background:#edeef0"></div>
<div class="a" style="left:206.25px;top:646px;width:27.5px;height:27.5px;border-radius:5px;border:2.4px solid #6d6d6f;background:#fff"></div>
<div class="a" style="left:260px;top:652px;width:28px;height:3.8px;background:#c9ccd1"></div>
<div class="a" style="left:260px;top:660px;width:28px;height:3.8px;background:#c9ccd1"></div>
<div class="a" style="left:260px;top:668.2px;width:28px;height:3.8px;background:#c9ccd1"></div>
<svg class="a" style="left:318px;top:645px" width="100" height="100" viewBox="0 0 100 100"><circle cx="50" cy="50" r="50" fill="#c9cbd0"/>
<path fill="#fff" d="M50 20C42.5 20 38.5 25.5 38.5 32.5C38.5 35 38.8 37 39.3 38.5C38 38.7 37.8 40.5 38.6 42.5C39.3 44.5 40.3 45 41 44.8C41.8 48.5 43.5 51 45 52.5V57.5C44 60 38 61.5 31 64C26 66 24.5 70 24.5 76.5C33 78.5 41 79 50 79C59 79 67 78.5 75.5 76.5C75.5 70 74 66 69 64C62 61.5 56 60 55 57.5V52.5C56.5 51 58.2 48.5 59 44.8C59.7 45 60.7 44.5 61.4 42.5C62.2 40.5 62 38.7 60.7 38.5C61.2 37 61.5 35 61.5 32.5C61.5 25.5 57.5 20 50 20Z"/></svg>
<div class="t" style="left:436.81px;top:664.95px;font-size:29px;line-height:29px;color:#2067b0;letter-spacing:-0.150px;">individual</div>
<div class="t" style="left:437.28px;top:698.45px;font-size:29px;line-height:29px;color:#4a525d;letter-spacing:-0.100px;">Clients</div>
<div class="t" style="left:778.18px;top:648.45px;font-size:29px;line-height:29px;color:#2067b0;letter-spacing:-0.150px;">Stacy Smith</div>
<div class="t" style="left:1143.86px;top:648.36px;font-size:29.1px;line-height:29.1px;color:#535c69;letter-spacing:0.600px;">09/09/2025</div>
<div class="t" style="left:1465.78px;top:648.45px;font-size:29px;line-height:29px;color:#535c69;letter-spacing:-0.100px;">Clients</div>
<div class="t" style="left:1799.53px;top:648.45px;font-size:29px;line-height:29px;color:#535c69;letter-spacing:-0.100px;">CRM form</div>
<div class="t" style="left:2104.18px;top:648.45px;font-size:29px;line-height:29px;color:#2067b0;letter-spacing:-0.150px;">Stacy Smith</div>
<div class="a" style="left:175.5px;top:765px;width:2564.5px;height:2px;background:#edeef0"></div>
<div class="a" style="left:206.25px;top:798px;width:27.5px;height:27.5px;border-radius:5px;border:2.4px solid #6d6d6f;background:#fff"></div>
<div class="a" style="left:260px;top:804px;width:28px;height:3.8px;background:#c9ccd1"></div>
<div class="a" style="left:260px;top:812px;width:28px;height:3.8px;background:#c9ccd1"></div>
<div class="a" style="left:260px;top:820.2px;width:28px;height:3.8px;background:#c9ccd1"></div>
<svg class="a" style="left:318px;top:797px" width="100" height="100" viewBox="0 0 100 100"><circle cx="50" cy="50" r="50" fill="#c9cbd0"/>
<path fill="#fff" d="M50 20C42.5 20 38.5 25.5 38.5 32.5C38.5 35 38.8 37 39.3 38.5C38 38.7 37.8 40.5 38.6 42.5C39.3 44.5 40.3 45 41 44.8C41.8 48.5 43.5 51 45 52.5V57.5C44 60 38 61.5 31 64C26 66 24.5 70 24.5 76.5C33 78.5 41 79 50 79C59 79 67 78.5 75.5 76.5C75.5 70 74 66 69 64C62 61.5 56 60 55 57.5V52.5C56.5 51 58.2 48.5 59 44.8C59.7 45 60.7 44.5 61.4 42.5C62.2 40.5 62 38.7 60.7 38.5C61.2 37 61.5 35 61.5 32.5C61.5 25.5 57.5 20 50 20Z"/></svg>
<div class="t" style="left:436.37px;top:816.95px;font-size:29px;line-height:29px;color:#2067b0;letter-spacing:-0.150px;">Emma</div>
<div class="t" style="left:437.28px;top:850.45px;font-size:29px;line-height:29px;color:#4a525d;letter-spacing:-0.100px;">Clients</div>
<div class="t" style="left:778.18px;top:800.45px;font-size:29px;line-height:29px;color:#2067b0;letter-spacing:-0.150px;">Stacy Smith</div>
<div class="t" style="left:1143.86px;top:800.36px;font-size:29.1px;line-height:29.1px;color:#535c69;letter-spacing:0.600px;">09/01/2025</div>
<div class="t" style="left:1465.78px;top:800.45px;font-size:29px;line-height:29px;color:#535c69;letter-spacing:-0.100px;">Clients</div>
<div class="t" style="left:1799.53px;top:800.45px;font-size:29px;line-height:29px;color:#535c69;letter-spacing:-0.100px;">CRM form</div>
<div class="t" style="left:2104.18px;top:800.45px;font-size:29px;line-height:29px;color:#2067b0;letter-spacing:-0.150px;">Stacy Smith</div>
<div class="a" style="left:175.5px;top:917px;width:2564.5px;height:2px;background:#edeef0"></div>
<div class="a" style="left:206.25px;top:950px;width:27.5px;height:27.5px;border-radius:5px;border:2.4px solid #6d6d6f;background:#fff"></div>
<div class="a" style="left:260px;top:956px;width:28px;height:3.8px;background:#c9ccd1"></div>
<div class="a" style="left:260px;top:964px;width:28px;height:3.8px;background:#c9ccd1"></div>
<div class="a" style="left:260px;top:972.2px;width:28px;height:3.8px;background:#c9ccd1"></div>
<svg class="a" style="left:318px;top:949px" width="100" height="100" viewBox="0 0 100 100"><circle cx="50" cy="50" r="50" fill="#c9cbd0"/>
<path fill="#fff" d="M50 20C42.5 20 38.5 25.5 38.5 32.5C38.5 35 38.8 37 39.3 38.5C38 38.7 37.8 40.5 38.6 42.5C39.3 44.5 40.3 45 41 44.8C41.8 48.5 43.5 51 45 52.5V57.5C44 60 38 61.5 31 64C26 66 24.5 70 24.5 76.5C33 78.5 41 79 50 79C59 79 67 78.5 75.5 76.5C75.5 70 74 66 69 64C62 61.5 56 60 55 57.5V52.5C56.5 51 58.2 48.5 59 44.8C59.7 45 60.7 44.5 61.4 42.5C62.2 40.5 62 38.7 60.7 38.5C61.2 37 61.5 35 61.5 32.5C61.5 25.5 57.5 20 50 20Z"/></svg>
<div class="t" style="left:438.10px;top:968.95px;font-size:29px;line-height:29px;color:#2067b0;letter-spacing:-0.150px;">Tom Williams</div>
<div class="t" style="left:437.38px;top:1002.45px;font-size:29px;line-height:29px;color:#4a525d;letter-spacing:-0.100px;">Other</div>
<div class="t" style="left:778.18px;top:952.45px;font-size:29px;line-height:29px;color:#2067b0;letter-spacing:-0.150px;">Stacy Smith</div>
<div class="t" style="left:1143.86px;top:952.36px;font-size:29.1px;line-height:29.1px;color:#535c69;letter-spacing:0.600px;">08/28/2025</div>
<div class="t" style="left:1465.88px;top:952.45px;font-size:29px;line-height:29px;color:#535c69;letter-spacing:-0.100px;">Other</div>
<div class="t" style="left:1798.62px;top:952.45px;font-size:29px;line-height:29px;color:#535c69;letter-spacing:-0.100px;">E-Mail</div>
<div class="t" style="left:2104.18px;top:952.45px;font-size:29px;line-height:29px;color:#2067b0;letter-spacing:-0.150px;">Stacy Smith</div>
<div class="a" style="left:175.5px;top:1069px;width:2564.5px;height:2px;background:#edeef0"></div>
<div class="a" style="left:206.25px;top:1102px;width:27.5px;height:27.5px;border-radius:5px;border:2.4px solid #6d6d6f;background:#fff"></div>
<div class="a" style="left:260px;top:1108px;width:28px;height:3.8px;background:#c9ccd1"></div>
<div class="a" style="left:260px;top:1116px;width:28px;height:3.8px;background:#c9ccd1"></div>
<div class="a" style="left:260px;top:1124.2px;width:28px;height:3.8px;background:#c9ccd1"></div>
<svg class="a" style="left:318px;top:1101px" width="100" height="100" viewBox="0 0 100 100"><circle cx="50" cy="50" r="50" fill="#c9cbd0"/>
<path fill="#fff" d="M50 20C42.5 20 38.5 25.5 38.5 32.5C38.5 35 38.8 37 39.3 38.5C38 38.7 37.8 40.5 38.6 42.5C39.3 44.5 40.3 45 41 44.8C41.8 48.5 43.5 51 45 52.5V57.5C44 60 38 61.5 31 64C26 66 24.5 70 24.5 76.5C33 78.5 41 79 50 79C59 79 67 78.5 75.5 76.5C75.5 70 74 66 69 64C62 61.5 56 60 55 57.5V52.5C56.5 51 58.2 48.5 59 44.8C59.7 45 60.7 44.5 61.4 42.5C62.2 40.5 62 38.7 60.7 38.5C61.2 37 61.5 35 61.5 32.5C61.5 25.5 57.5 20 50 20Z"/></svg>
<div class="t" style="left:436.37px;top:1120.95px;font-size:29px;line-height:29px;color:#2067b0;letter-spacing:-0.150px;">Pierre Blanc</div>
<div class="t" style="left:437.28px;top:1154.45px;font-size:29px;line-height:29px;color:#4a525d;letter-spacing:-0.100px;">Clients</div>
<div class="t" style="left:777.12px;top:1104.45px;font-size:29px;line-height:29px;color:#2067b0;letter-spacing:-0.150px;">Nicolas Crooks</div>
<div class="t" style="left:1143.86px;top:1104.36px;font-size:29.1px;line-height:29.1px;color:#535c69;letter-spacing:0.600px;">08/26/2025</div>
<div class="t" style="left:1465.78px;top:1104.45px;font-size:29px;line-height:29px;color:#535c69;letter-spacing:-0.100px;">Clients</div>
<div class="t" style="left:1799.53px;top:1104.45px;font-size:29px;line-height:29px;color:#535c69;letter-spacing:-0.100px;">Call</div>
<div class="t" style="left:2103.12px;top:1104.45px;font-size:29px;line-height:29px;color:#2067b0;letter-spacing:-0.150px;">Nicolas Crooks</div>
<div class="t" style="left:439.22px;top:1223.59px;font-size:24.7px;line-height:24.7px;color:#a8adb4;letter-spacing:0.601px;">Booking</div>
<div class="a" style="left:438.25px;top:1261px;width:153.75px;height:40px;border-radius:20px;background:#e3f2fa"></div>
<div class="t" style="left:454.20px;top:1270.65px;font-size:19.6px;line-height:19.6px;color:#1f8ec6;font-weight:700;letter-spacing:0.935px;">COMING UP</div>
<div class="a" style="left:175.5px;top:1327px;width:2564.5px;height:3.5px;background:#eef0f3"></div>
<div class="a" style="left:1300px;top:1351.25px;width:315.5px;height:83.25px;border-radius:42px;border:2px solid #c6cbd1"></div>
<div class="t" style="left:1390.54px;top:1380.73px;font-size:26.6px;line-height:26.6px;color:#2067b0;letter-spacing:0.138px;">Show more</div>
<div class="a" style="left:175.5px;top:1459px;width:2564.5px;height:3.5px;background:#eef0f3"></div>
<div class="t" style="left:214.38px;top:1505.05px;font-size:21.5px;line-height:21.5px;color:#535c69;font-weight:700;letter-spacing:0.600px;">SELECTED: <span style="color:#000">0 / 5</span></div>
<div class="t" style="left:507.26px;top:1505.05px;font-size:21.5px;line-height:21.5px;color:#535c69;font-weight:700;letter-spacing:0.600px;">TOTAL: <span style="color:#2067b0">SHOW QUANTITY</span></div>
<div class="t" style="left:1270.56px;top:1505.05px;font-size:21.5px;line-height:21.5px;color:#535c69;font-weight:700;letter-spacing:0.600px;">PAGES:</div>
<div class="t" style="left:1362.40px;top:1505.05px;font-size:21.5px;line-height:21.5px;color:#535c69;font-weight:700;">1</div>
<div class="a" style="left:1385.5px;top:1502.5px;width:1.5px;height:25px;background:#c5cad0"></div>
<div class="t" style="left:1403.56px;top:1505.05px;font-size:21.5px;line-height:21.5px;color:#2067b0;font-weight:700;letter-spacing:0.600px;">NEXT</div>
<div class="a" style="left:1476.25px;top:1502.5px;width:1.5px;height:25px;background:#c5cad0"></div>
<div class="t" style="left:1493.56px;top:1505.05px;font-size:21.5px;line-height:21.5px;color:#2067b0;font-weight:700;letter-spacing:0.600px;">LAST</div>
<div class="a" style="left:2584px;top:1510px;width:129.5px;height:44px;border-radius:8px;border:2px solid #b9bec4;background:#fff"></div>
<div class="a" style="left:2784px;top:1489px;width:58px;height:58px;border-radius:50%;background:#2a5f9e"></div>
<div class="a" style="left:2258px;top:244px;width:582px;height:1290px;background:#fff;border-radius:30px;box-shadow:0 24px 40px rgba(0,0,0,0.2),0 2px 12px rgba(0,0,0,0.07)"></div>
<svg class="a" style="left:2686px;top:229px" width="50" height="18" viewBox="0 0 50 18"><path d="M5 16L24 2L44 16Z" fill="#fff"/></svg>
<div class="t" style="left:2292.34px;top:285.62px;font-size:28.8px;line-height:28.8px;color:#333333;letter-spacing:0.050px;">Import <b>vCard</b></div>
<div class="t" style="left:2292.34px;top:357.37px;font-size:28.8px;line-height:28.8px;color:#333333;letter-spacing:0.050px;">Import <b>GMail</b> CSV</div>
<div class="t" style="left:2292.34px;top:429.37px;font-size:28.8px;line-height:28.8px;color:#333333;letter-spacing:0.050px;">Import <b>Outlook</b> CSV</div>
<div class="t" style="left:2292.34px;top:501.37px;font-size:28.8px;line-height:28.8px;color:#333333;letter-spacing:0.050px;">Import <b>Yahoo! Mail</b> CSV</div>
<div class="t" style="left:2292.34px;top:573.62px;font-size:28.8px;line-height:28.8px;color:#333333;letter-spacing:0.150px;">Import custom CSV</div>
<div class="t" style="left:2292.64px;top:645.62px;font-size:28.8px;line-height:28.8px;color:#333333;letter-spacing:0.150px;">Migrate from other CRM</div>
<div class="t" style="left:2292.64px;top:751.62px;font-size:28.8px;line-height:28.8px;color:#333333;letter-spacing:0.150px;">Export to CSV</div>
<div class="t" style="left:2292.64px;top:823.62px;font-size:28.8px;line-height:28.8px;color:#333333;letter-spacing:0.150px;">Export to Excel</div>
<div class="t" style="left:2292.64px;top:929.87px;font-size:28.8px;line-height:28.8px;color:#333333;letter-spacing:0.150px;">Export to Outlook</div>
<div class="t" style="left:2292.64px;top:1035.62px;font-size:28.8px;line-height:28.8px;color:#333333;letter-spacing:0.150px;">Duplicate control</div>
<div class="t" style="left:2292.64px;top:1107.62px;font-size:28.8px;line-height:28.8px;color:#333333;letter-spacing:0.150px;">Find and merge duplicates</div>
<div class="t" style="left:2292.64px;top:1179.37px;font-size:28.8px;line-height:28.8px;color:#333333;letter-spacing:0.150px;">How do I handle duplicate entities?</div>
<div class="t" style="left:2293.69px;top:1285.62px;font-size:28.8px;line-height:28.8px;color:#333333;letter-spacing:0.150px;">Solution presets</div>
<div class="t" style="left:2292.64px;top:1357.62px;font-size:28.8px;line-height:28.8px;color:#333333;letter-spacing:0.150px;">Proactive CRM</div>
<div class="t" style="left:2294.94px;top:1463.62px;font-size:28.8px;line-height:28.8px;color:#333333;letter-spacing:0.150px;">Access permissions</div>
<div class="a" style="left:2294px;top:712px;width:510px;height:2px;background:#eceef0"></div>
<div class="a" style="left:2294px;top:890px;width:510px;height:2px;background:#eceef0"></div>
<div class="a" style="left:2294px;top:995.5px;width:510px;height:2px;background:#eceef0"></div>
<div class="a" style="left:2294px;top:1246px;width:510px;height:2px;background:#eceef0"></div>
<div class="a" style="left:2294px;top:1424px;width:510px;height:2px;background:#eceef0"></div>
<svg class="a" style="left:2764px;top:1176px" width="28" height="28" viewBox="0 0 28 28"><circle cx="14" cy="14.5" r="12" fill="#c8cbd0"/><path d="M10.2 11.5A3.8 3.8 0 1 1 15.5 15C14.5 15.6 14 16.2 14 17.5" fill="none" stroke="#fff" stroke-width="2.6" stroke-linecap="round"/><circle cx="14" cy="21.3" r="1.6" fill="#fff"/></svg>
<svg class="a" style="left:2768px;top:1354px" width="28" height="36" viewBox="0 0 28 36"><path d="M7.5 5.5L20.5 18L7.5 30.5" fill="none" stroke="#a9aeb4" stroke-width="2.4" stroke-linecap="round" stroke-linejoin="round"/></svg>
<div class="a" style="left:2267.25px;top:1008px;width:300.5px;height:82.5px;border-radius:38px;border:8px solid #f35b4b"></div>
<div class="a" style="left:2526px;top:979px;width:68px;height:68px;border-radius:50%;background:#f35b4b"></div>
<div class="t" style="left:2546.88px;top:994.46px;font-size:40.5px;line-height:40.5px;color:#fff;-webkit-text-stroke:1.2px #fff;">5</div>
</body></html>
